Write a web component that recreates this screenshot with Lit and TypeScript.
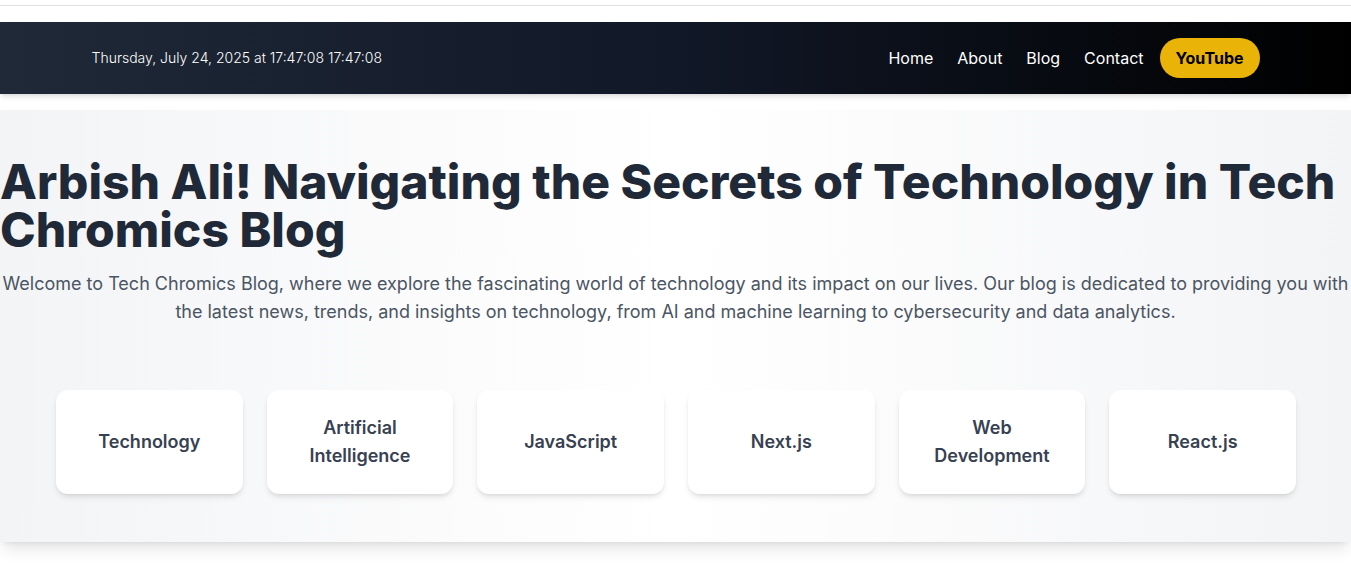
import { LitElement, html, css } from "lit";
import { customElement } from "lit/decorators.js";

const LINKS = ["Home", "About", "Blog", "Contact"];
const TOPICS = ["Technology", "Artificial Intelligence", "JavaScript", "Next.js", "Web Development", "React.js"];

@customElement("app-root")
export class AppRoot extends LitElement {
  static styles = css`
    :host {
      display: block;
      padding-bottom: 24px;
      font-family: Inter, sans-serif;
      font-size: 16px;
      line-height: 24px;
      background: #fff;
    }
    * {
      box-sizing: border-box;
      margin: 0;
    }
    a {
      color: inherit;
      text-decoration: none;
    }
    .top-line {
      height: 6px;
      border-bottom: 1px solid #e0e0e0;
    }
    .bar {
      margin-top: 16px;
      padding: 16px 24px;
      color: #fff;
      background: linear-gradient(to right, #1f2937, #111827, #000);
      box-shadow: 0 4px 6px -1px rgb(0 0 0 / 0.1), 0 2px 4px -2px rgb(0 0 0 / 0.1);
    }
    .bar-inner {
      display: flex;
      align-items: center;
      justify-content: space-between;
      max-width: 1168px;
      margin: 0 auto;
    }
    .clock {
      font-size: 14px;
      line-height: 20px;
      font-weight: 300;
    }
    .links {
      display: flex;
      align-items: center;
      gap: 24px;
    }
    .youtube {
      margin-left: -8px;
      padding: 8px 16px;
      border-radius: 20px;
      background: #eab308;
      color: #000;
      font-weight: 700;
    }
    .hero {
      margin-top: 16px;
      padding: 48px 0;
      background: linear-gradient(to right, #f3f4f6, #fff, #f3f4f6);
      box-shadow: 0 10px 15px -3px rgb(0 0 0 / 0.1), 0 4px 6px -4px rgb(0 0 0 / 0.1);
    }
    .title {
      font-size: 48px;
      line-height: 48px;
      font-weight: 800;
      color: #1f2937;
    }
    .intro {
      margin-top: 16px;
      font-size: 18px;
      line-height: 28px;
      text-align: center;
      color: #4b5563;
    }
    .topics {
      display: grid;
      grid-template-columns: repeat(6, minmax(0, 1fr));
      gap: 24px;
      margin-top: 64px;
      padding: 0 55px 0 56px;
    }
    .topic {
      display: flex;
      align-items: center;
      justify-content: center;
      min-height: 104px;
      padding: 24px;
      border-radius: 12px;
      background: #fff;
      box-shadow: 0 4px 6px -1px rgb(0 0 0 / 0.1), 0 2px 4px -2px rgb(0 0 0 / 0.1);
      font-size: 18px;
      line-height: 28px;
      font-weight: 600;
      text-align: center;
      color: #374151;
    }
  `;

  render() {
    return html`
      <div class="top-line"></div>
      <header class="bar">
        <div class="bar-inner">
          <time class="clock">Thursday, July 24, 2025 at 17:47:08 17:47:08</time>
          <nav class="links">
            ${LINKS.map((l) => html`<a href="#">${l}</a>`)}
            <a class="youtube" href="#">YouTube</a>
          </nav>
        </div>
      </header>
      <main class="hero">
        <h1 class="title">Arbish Ali! Navigating the Secrets of Technology in Tech Chromics Blog</h1>
        <p class="intro">
          Welcome to Tech Chromics Blog, where we explore the fascinating world of technology and its impact on our
          lives. Our blog is dedicated to providing you with the latest news, trends, and insights on technology, from
          AI and machine learning to cybersecurity and data analytics.
        </p>
        <section class="topics">
          ${TOPICS.map((t) => html`<a class="topic" href="#">${t}</a>`)}
        </section>
      </main>
    `;
  }
}
